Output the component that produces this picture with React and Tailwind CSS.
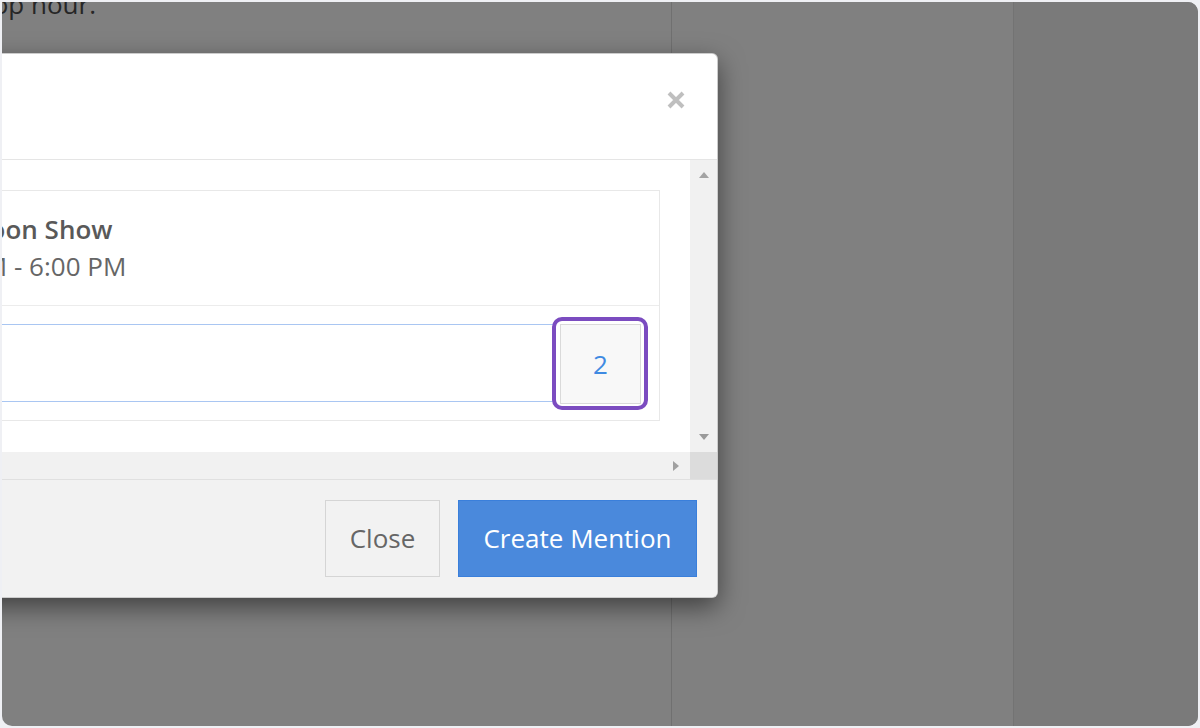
import React from 'react';

function Triangle({ dir = 'up', color = '#a3a3a3' }) {
  const pts = {
    up: '0,6 5,0 10,6',
    down: '0,0 10,0 5,6',
    right: '0,0 6,5 0,10',
  };
  const w = dir === 'right' ? 6 : 10;
  const h = dir === 'right' ? 10 : 6;
  return (
    <svg width={w} height={h} viewBox={`0 0 ${w} ${h}`}>
      <polygon points={pts[dir]} fill={color} />
    </svg>
  );
}

function CloseIcon() {
  return (
    <svg width="18" height="18" viewBox="0 0 18 18">
      <path d="M2 2 L16 16 M16 2 L2 16" stroke="#bfbfbf" strokeWidth="4" strokeLinecap="butt" />
    </svg>
  );
}

function MentionModal() {
  return (
    <div className="absolute left-[-144px] top-[51px] w-[860px] h-[545px] bg-white rounded-[6px] border border-black/20 shadow-[0_9px_26px_rgba(0,0,0,0.5)] overflow-hidden flex flex-col">
      {/* header */}
      <div className="h-[106px] shrink-0 border-b border-[#e5e5e5] flex items-start justify-end pt-[37px] pr-[32px]">
        <CloseIcon />
      </div>

      {/* body with fake scrollbars */}
      <div className="h-[319px] shrink-0 flex flex-col">
        <div className="flex h-[292px]">
          <div className="flex-1 p-[30px] pb-0">
            <div className="border border-[#e8e8e8]">
              <div className="px-[20px] pt-[20px] pb-[20px] border-b border-[#ececec] whitespace-nowrap">
                <div className="text-[26px] leading-[36px] font-semibold text-[#595959]">Afternoon Show</div>
                <div className="text-[26px] leading-[38px] text-[#666]">3:00 PM - 6:00 PM</div>
              </div>
              <div className="flex items-start gap-[4px] pl-[18px] pr-[18px] pt-[18px] pb-[16px]">
                <div className="flex-1 h-[78px] border border-[#a9c6f2] bg-white" />
                <div className="relative w-[81px] h-[80px]">
                  <button className="w-full h-full bg-[#f8f8f8] border border-[#dadada] text-[26px] text-[#3f8ae2]">2</button>
                  <div className="absolute -left-[8px] -top-[7px] -right-[7px] -bottom-[6px] border-[4px] border-[#7b4cc0] rounded-[10px]" />
                </div>
              </div>
            </div>
          </div>
          <div className="w-[27px] bg-[#f1f1f1] flex flex-col items-center justify-between pt-[12px] pb-[12px]">
            <Triangle dir="up" color="#a3a3a3" />
            <Triangle dir="down" color="#9a9a9a" />
          </div>
        </div>
        <div className="flex h-[27px]">
          <div className="flex-1 bg-[#f1f1f1] flex items-center justify-end pr-[11px]">
            <Triangle dir="right" color="#a0a0a0" />
          </div>
          <div className="w-[27px] bg-[#dcdcdc]" />
        </div>
      </div>

      {/* footer */}
      <div className="flex-1 border-t border-[#e0e0e0] bg-[#f2f2f2] flex justify-end items-start gap-[18px] pt-[20px] pr-[20px]">
        <button className="w-[115px] h-[77px] border border-[#d5d5d5] bg-[#f2f2f2] text-[26px] text-[#666]">Close</button>
        <button className="w-[239px] h-[77px] border border-[#3a7fdb] bg-[#4a89dc] text-[26px] text-white">Create Mention</button>
      </div>
    </div>
  );
}

export default function App() {
  return (
    <div className="w-[1200px] h-[728px] bg-[#eff0f4] p-[2px] overflow-hidden font-['Open_Sans',sans-serif]">
      <div className="relative h-full flex rounded-tr-[10px] rounded-b-[10px] overflow-hidden bg-[#808080]">
        <div className="w-[670px] shrink-0 border-r border-[#707070]">
          <div className="w-[94px] flex justify-end whitespace-nowrap -mt-[16px] text-[26px] leading-[36px] text-[#262626]">
            Remind listeners about the sponsor at the top hour.
          </div>
        </div>
        <div className="w-[342px] shrink-0 border-r border-[#737373]" />
        <div className="flex-1 bg-[#7a7a7a]" />
        <MentionModal />
      </div>
    </div>
  );
}
